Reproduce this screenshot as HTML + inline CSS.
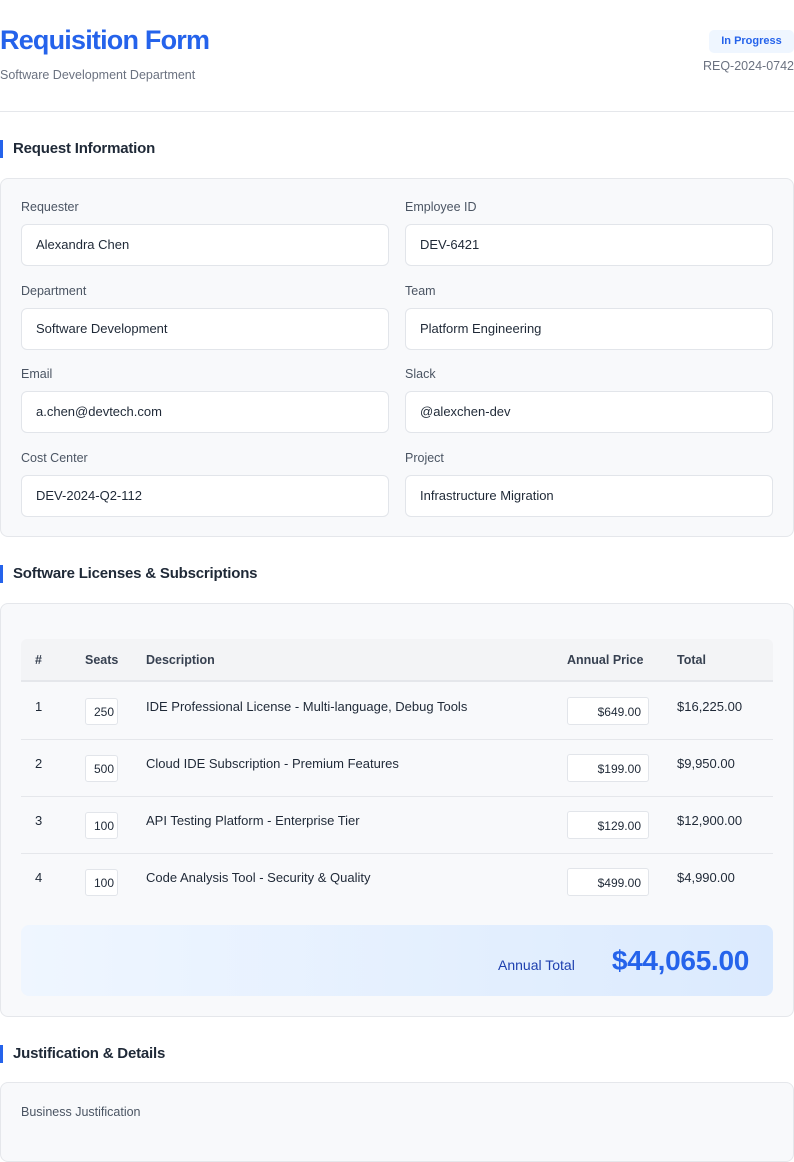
<!DOCTYPE html>
<html><head><meta charset="utf-8"><style>
*{box-sizing:border-box;margin:0;padding:0}
body{width:794px;height:1123px;overflow:hidden;background:#fff;font-family:"Liberation Sans",sans-serif;color:#1f2937;position:relative}
.a{position:absolute;white-space:nowrap}
.h1{left:0;top:25px;font-size:27px;font-weight:bold;color:#2563eb;letter-spacing:-0.8px}
.sub{left:0;top:68px;font-size:12.5px;color:#6b7280}
.badge{left:709px;top:30px;width:85px;height:23px;background:#eff6ff;border-radius:5px;color:#2563eb;font-size:11px;font-weight:bold;text-align:center;line-height:23px}
.req{right:0;top:59px;font-size:12.5px;color:#6b7280}
.hr{left:0;top:111px;width:794px;height:1px;background:#e5e7eb}
.sec{left:0;height:18px;border-left:3px solid #2563eb;padding-left:10px;font-size:15px;font-weight:bold;color:#1f2937;line-height:18px;letter-spacing:-0.2px}
.card{left:0;width:794px;background:#f8f9fb;border:1px solid #e5e7eb;border-radius:8px}
.lbl{font-size:12.5px;color:#4b5563}
.inp{width:368px;height:42px;background:#fff;border:1px solid #e2e5ea;border-radius:6px;font-size:13px;color:#1f2937;padding-left:14px;line-height:40px}
.th{left:21px;top:639px;width:752px;height:43px;background:#f3f4f6;border-bottom:2px solid #e5e7eb;border-radius:6px 6px 0 0}
.thc{font-size:12.5px;color:#374151;font-weight:bold;top:653px}
.row{left:21px;width:752px;height:1px;background:#e5e7eb}
.td{font-size:13px;color:#1f2937}
.seat{width:33px;height:27px;background:#fff;border:1px solid #e2e5ea;border-radius:3px;font-size:12px;padding-left:8px;line-height:26px;overflow:hidden}
.price{width:82px;height:28px;background:#fff;border:1px solid #e2e5ea;border-radius:3px;font-size:12px;text-align:right;padding-right:7px;line-height:28px}
</style></head><body>
<div class="a h1">Requisition Form</div>
<div class="a sub">Software Development Department</div>
<div class="a badge">In Progress</div>
<div class="a req">REQ-2024-0742</div>
<div class="a hr"></div>

<div class="a sec" style="top:140px">Request Information</div>
<div class="a card" style="top:178px;height:359px"></div>
<div class="a lbl" style="left:21px;top:200px">Requester</div>
<div class="a lbl" style="left:405px;top:200px">Employee ID</div>
<div class="a inp" style="left:21px;top:224px">Alexandra Chen</div>
<div class="a inp" style="left:405px;top:224px">DEV-6421</div>
<div class="a lbl" style="left:21px;top:284px">Department</div>
<div class="a lbl" style="left:405px;top:284px">Team</div>
<div class="a inp" style="left:21px;top:308px">Software Development</div>
<div class="a inp" style="left:405px;top:308px">Platform Engineering</div>
<div class="a lbl" style="left:21px;top:367px">Email</div>
<div class="a lbl" style="left:405px;top:367px">Slack</div>
<div class="a inp" style="left:21px;top:391px">a.chen@devtech.com</div>
<div class="a inp" style="left:405px;top:391px">@alexchen-dev</div>
<div class="a lbl" style="left:21px;top:451px">Cost Center</div>
<div class="a lbl" style="left:405px;top:451px">Project</div>
<div class="a inp" style="left:21px;top:475px">DEV-2024-Q2-112</div>
<div class="a inp" style="left:405px;top:475px">Infrastructure Migration</div>

<div class="a sec" style="top:565px">Software Licenses &amp; Subscriptions</div>
<div class="a card" style="top:603px;height:414px"></div>
<div class="a th"></div>
<div class="a thc" style="left:35px">#</div>
<div class="a thc" style="left:85px">Seats</div>
<div class="a thc" style="left:146px">Description</div>
<div class="a thc" style="left:567px">Annual Price</div>
<div class="a thc" style="left:677px">Total</div>

<div class="a td" style="left:35px;top:699px">1</div>
<div class="a seat" style="left:85px;top:698px">250</div>
<div class="a td" style="left:146px;top:699px">IDE Professional License - Multi-language, Debug Tools</div>
<div class="a price" style="left:567px;top:697px">$649.00</div>
<div class="a td" style="left:677px;top:699px">$16,225.00</div>
<div class="a row" style="top:739px"></div>

<div class="a td" style="left:35px;top:756px">2</div>
<div class="a seat" style="left:85px;top:755px">500</div>
<div class="a td" style="left:146px;top:756px">Cloud IDE Subscription - Premium Features</div>
<div class="a price" style="left:567px;top:754px">$199.00</div>
<div class="a td" style="left:677px;top:756px">$9,950.00</div>
<div class="a row" style="top:796px"></div>

<div class="a td" style="left:35px;top:813px">3</div>
<div class="a seat" style="left:85px;top:812px">100</div>
<div class="a td" style="left:146px;top:813px">API Testing Platform - Enterprise Tier</div>
<div class="a price" style="left:567px;top:811px">$129.00</div>
<div class="a td" style="left:677px;top:813px">$12,900.00</div>
<div class="a row" style="top:853px"></div>

<div class="a td" style="left:35px;top:870px">4</div>
<div class="a seat" style="left:85px;top:869px">100</div>
<div class="a td" style="left:146px;top:870px">Code Analysis Tool - Security &amp; Quality</div>
<div class="a price" style="left:567px;top:868px">$499.00</div>
<div class="a td" style="left:677px;top:870px">$4,990.00</div>

<div class="a" style="left:21px;top:925px;width:752px;height:71px;border-radius:8px;background:linear-gradient(90deg,#eff6ff,#dbeafe)"></div>
<div class="a" style="left:498px;top:957px;font-size:14px;color:#1e40af">Annual Total</div>
<div class="a" style="right:45px;top:945px;font-size:28px;font-weight:bold;color:#2563eb;letter-spacing:-0.3px">$44,065.00</div>

<div class="a sec" style="top:1045px">Justification &amp; Details</div>
<div class="a card" style="top:1082px;height:80px"></div>
<div class="a lbl" style="left:21px;top:1105px">Business Justification</div>
</body></html>
